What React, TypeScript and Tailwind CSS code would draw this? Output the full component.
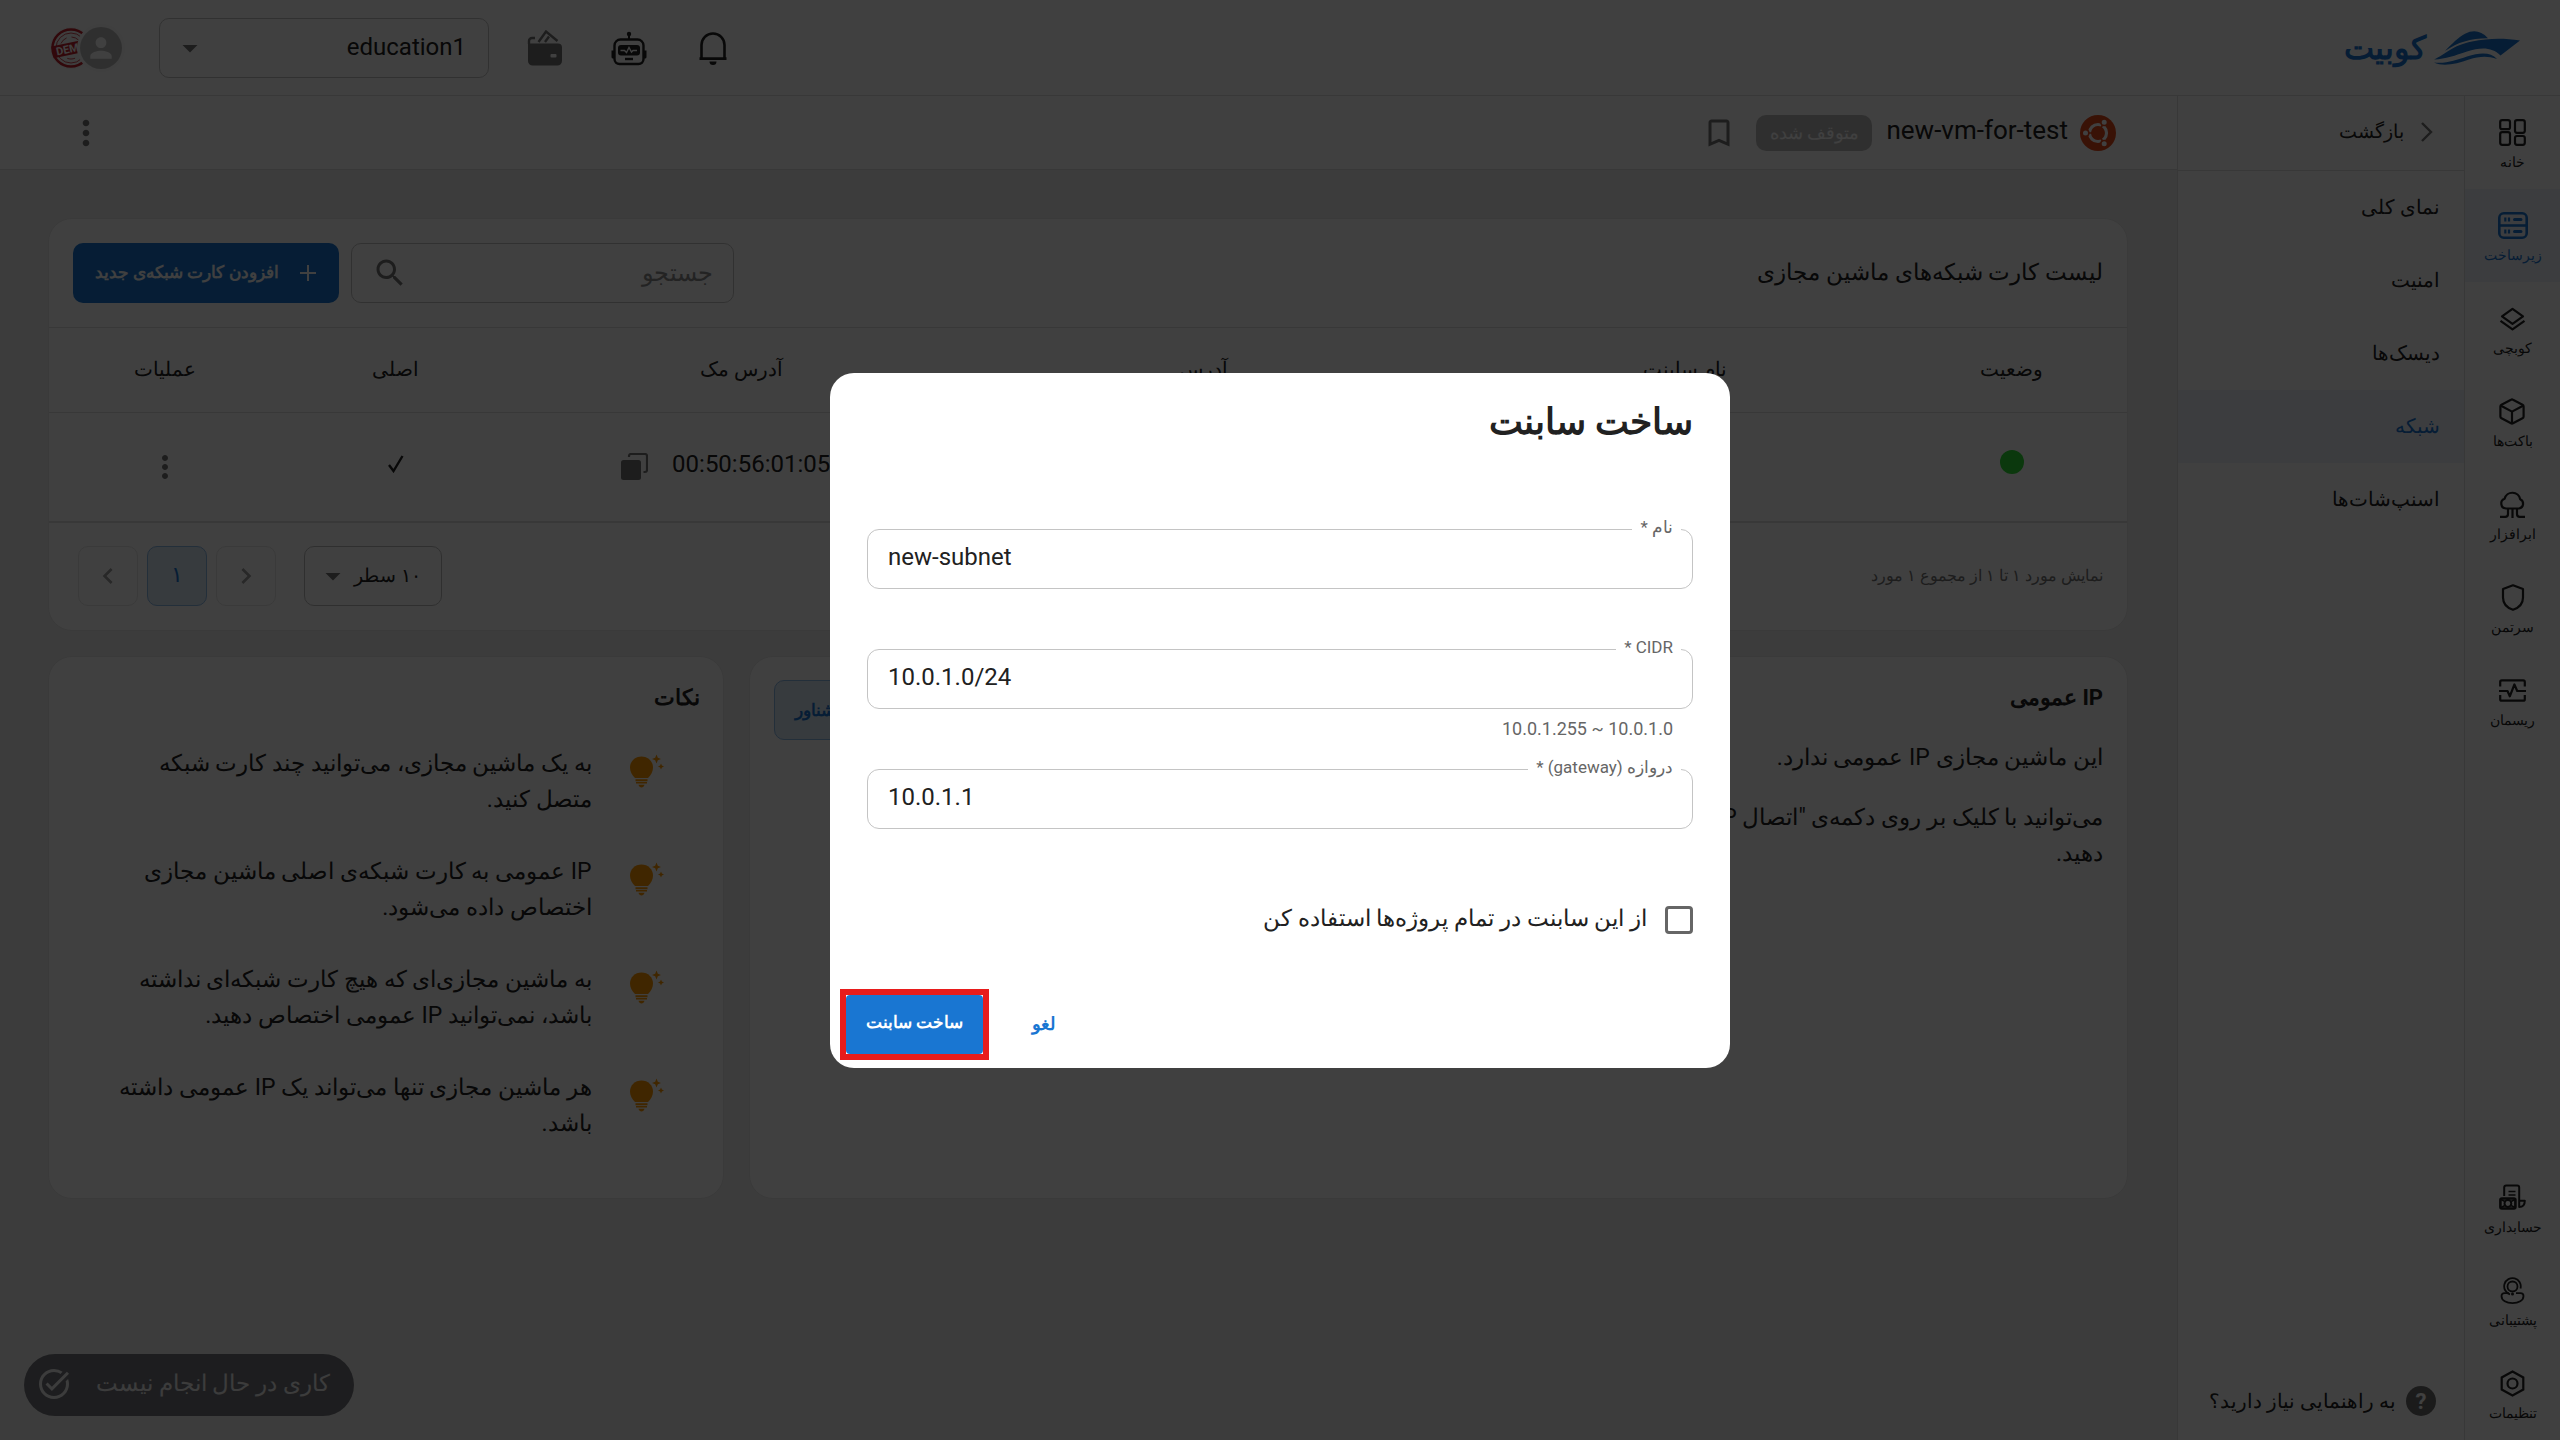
import type { ReactNode } from "react";

const FONT = "font-[Roboto,'Noto_Sans','Open_Sans',sans-serif]";

function Glyph({ d, className }: { d: string; className: string }) {
  return (
    <svg viewBox="0 0 24 24" fill="currentColor" className={"shrink-0 " + className} aria-hidden="true">
      <path d={d} />
    </svg>
  );
}

const MORE = "M12 8c1.1 0 2-.9 2-2s-.9-2-2-2-2 .9-2 2 .9 2 2 2zm0 2c-1.1 0-2 .9-2 2s.9 2 2 2 2-.9 2-2-.9-2-2-2zm0 6c-1.1 0-2 .9-2 2s.9 2 2 2 2-.9 2-2-.9-2-2-2z";
const DROP = "M7 10l5 5 5-5z";
const SEARCH =
  "M15.5 14h-.79l-.28-.27C15.41 12.59 16 11.11 16 9.5 16 5.91 13.09 3 9.5 3S3 5.91 3 9.5 5.91 16 9.5 16c1.61 0 3.09-.59 4.23-1.57l.27.28v.79l5 4.99L20.49 19l-4.99-5zm-6 0C7.01 14 5 11.99 5 9.5S7.01 5 9.5 5 14 7.01 14 9.5 11.99 14 9.5 14z";
const BOOKMARK = "M17 3H7c-1.1 0-1.99.9-1.99 2L5 21l7-3 7 3V5c0-1.1-.9-2-2-2zm0 15l-5-2.18L7 18V5h10v13z";
const PERSON = "M12 12c2.21 0 4-1.79 4-4s-1.79-4-4-4-4 1.79-4 4 1.79 4 4 4zm0 2c-2.67 0-8 1.34-8 4v2h16v-2c0-2.66-5.33-4-8-4z";
const TASK =
  "M22 5.18L10.59 16.6l-4.24-4.24 1.41-1.41 2.83 2.83 10-10L22 5.18zm-2.21 5.04c.13.57.21 1.17.21 1.78 0 4.42-3.58 8-8 8s-8-3.58-8-8 3.58-8 8-8c1.58 0 3.04.46 4.28 1.25l1.44-1.44A9.9 9.9 0 0 0 12 2C6.48 2 2 6.48 2 12s4.48 10 10 10 10-4.48 10-10c0-1.19-.22-2.33-.6-3.39l-1.61 1.61z";
const CHEV_R = "M10 6L8.59 7.41 13.17 12l-4.58 4.59L10 18l6-6z";
const CHEV_L = "M15.41 7.41L14 6l-6 6 6 6 1.41-1.41L10.83 12z";

function RailSvg({ children }: { children: ReactNode }) {
  return (
    <svg viewBox="0 0 27 27" className="size-[27px]" fill="none" stroke="currentColor" strokeWidth="2.2" strokeLinejoin="round" aria-hidden="true">
      {children}
    </svg>
  );
}

const topRail: { label: string; active?: boolean; icon: ReactNode }[] = [
  {
    label: "خانه",
    icon: (
      <RailSvg>
        <rect x="1.2" y="1.2" width="9.8" height="9" rx="2" />
        <rect x="16" y="1.2" width="9.8" height="12.6" rx="2" />
        <rect x="1.2" y="13.2" width="9.8" height="12.6" rx="2" />
        <rect x="16" y="17" width="9.8" height="8.8" rx="2" />
      </RailSvg>
    ),
  },
  {
    label: "زیرساخت",
    active: true,
    icon: (
      <svg viewBox="0 0 30 27" className="h-[27px] w-[30px]" fill="none" stroke="currentColor" strokeWidth="2.6" aria-hidden="true">
        <rect x="1.3" y="1.3" width="27.4" height="24.4" rx="4.5" />
        <path d="M1 13.5h28" />
        <path d="M7.3 5.4v4M11 5.4v4M7.3 17.4v4M11 17.4v4" strokeWidth="2.2" />
        <path d="M16.500 7.400h6.500M16.500 19.400h6.500" strokeWidth="3" strokeLinecap="round" />
      </svg>
    ),
  },
  {
    label: "کوبچی",
    icon: (
      <RailSvg>
        <path d="M13.5 3.800L24 11.300l-10.500 7.500L3 11.300z" />
        <path d="M1.500 15.800l12 8.600 12-8.600" />
      </RailSvg>
    ),
  },
  {
    label: "باکت‌ها",
    icon: (
      <RailSvg>
        <path d="M12 1.700a2 2 0 0 1 2 0l9.500 5a2 2 0 0 1 1.100 1.800v10a2 2 0 0 1-1.100 1.800l-9.500 5a2 2 0 0 1-2 0l-9.500-5a2 2 0 0 1-1.100-1.800v-10a2 2 0 0 1 1.100-1.800z" />
        <path d="M2 7.800l11 5.800 11-5.800M13 13.600v12" />
      </RailSvg>
    ),
  },
  {
    label: "ابرافزار",
    icon: (
      <RailSvg>
        <path d="M7 17.500a5 5 0 0 1-1.400-9.700 8 8 0 0 1 15.600.400A4.900 4.900 0 0 1 20 17.500z" />
        <path d="M13.500 17.500V27M9 17.500v5.500a2.800 2.800 0 0 1-2.800 2.800H1M18 17.500v5.500a2.800 2.800 0 0 0 2.800 2.800H26" />
      </RailSvg>
    ),
  },
  {
    label: "سرتمن",
    icon: (
      <RailSvg>
        <path d="M14 1.300L24 5v8.500c0 6.500-4 10.300-10 12.300-6-2-10-5.800-10-12.300V5z" />
      </RailSvg>
    ),
  },
  {
    label: "ریسمان",
    icon: (
      <RailSvg>
        <path d="M1.200 9.500V4.900a1.500 1.500 0 0 1 1.500-1.500h21.600a1.500 1.500 0 0 1 1.500 1.500v4.600M1.200 18v4.200a1.500 1.500 0 0 0 1.500 1.500h21.600a1.500 1.500 0 0 0 1.500-1.500V18" />
        <path d="M0 14h8.500l2.300 5.300 4.600-11.800 2.800 6.500H27" />
      </RailSvg>
    ),
  },
];

const bottomRail: { label: string; active?: boolean; icon: ReactNode }[] = [
  {
    label: "حسابداری",
    icon: (
      <RailSvg>
        <path d="M5.200 12V3.500a2 2 0 0 1 2-2h11a2 2 0 0 1 2 2V23c2.800 0 5.600-1 5.600-6.200h-5.600" strokeWidth="2" />
        <path d="M9.500 7.500h7M9.500 11h7" strokeWidth="1.600" />
        <rect x="1.400" y="14.500" width="15" height="10" rx="1.500" strokeWidth="2.600" />
        <circle cx="8.900" cy="19.500" r="3.400" strokeWidth="2" />
        <path d="M2 15.500l4 2M2 23.500l4-2M16 15.500l-4 2M16 23.500l-4-2" strokeWidth="1.800" />
      </RailSvg>
    ),
  },
  {
    label: "پشتیبانی",
    icon: (
      <RailSvg>
        <circle cx="13.500" cy="9.500" r="5" strokeWidth="1.800" />
        <path d="M21.500 11.500A8.300 8.300 0 1 0 11 17.300" strokeWidth="1.800" />
        <path d="M10 16.200H5.500c-2 0-3 1-3 2.700 0 4.500 5 7.200 11 7.200s11-2.700 11-7.200c0-1.700-1-2.700-3-2.700H17" strokeWidth="1.800" />
        <circle cx="13.500" cy="17" r="1.500" fill="currentColor" stroke="none" />
      </RailSvg>
    ),
  },
  {
    label: "تنظیمات",
    icon: (
      <RailSvg>
        <path d="M13.500 1.500l10.800 6v12l-10.800 6-10.800-6v-12z" strokeLinejoin="miter" />
        <circle cx="13.500" cy="13.500" r="5" />
      </RailSvg>
    ),
  },
];

function RailItem({ label, icon, active }: { label: string; icon: ReactNode; active?: boolean }) {
  return (
    <a
      href="#"
      className={"flex h-[93px] flex-col items-center gap-1 pt-[23px] " + (active ? "bg-[#edf4fb] text-[#1976d2]" : "text-[#212121]")}
    >
      {icon}
      <span className="text-[14px] leading-6">{label}</span>
    </a>
  );
}

const subnav = ["نمای کلی", "امنیت", "دیسک‌ها", "شبکه", "اسنپ‌شات‌ها"];

function Logo() {
  return (
    <a href="#" className="flex items-center gap-2 text-[#1976d2]">
      <svg viewBox="0 0 86 34" className="h-[34px] w-[86px]" fill="currentColor" aria-hidden="true">
        <path d="M0 28.500C12 23 18 14.500 38 10.500 55 7 70 7 86 9.500L66.500 24.500C58 16 47 16 33 20.500 21 24.500 12 28 0 28.500z" />
        <path d="M11 20C18 13 24 6.500 31 2.800c8.500-4.300 16-3 23 4.400C36 7.500 24 11 11 20z" />
        <path d="M0 31.500c12 1.500 22-2.500 33-6 14-4.500 24-4 30 2.500-10-3.500-18-2.500-28 .5-12 4.500-26 7.500-35 3z" />
      </svg>
      <span className="text-[32px] leading-10 font-bold">کوبیت</span>
    </a>
  );
}

function Bell() {
  return (
    <svg viewBox="0 0 36 36" className="size-9" fill="none" stroke="currentColor" strokeWidth="2.600" aria-hidden="true">
      <path d="M6.500 28V15a11.500 11.500 0 0 1 23 0v13M4.500 28.600h27" />
      <path d="M14.500 31.500h7a3.500 3.500 0 0 1-7 0z" fill="currentColor" stroke="none" />
    </svg>
  );
}

function Robot() {
  return (
    <svg viewBox="0 0 36 36" className="size-9" fill="none" stroke="currentColor" strokeWidth="2.400" aria-hidden="true">
      <circle cx="18" cy="4" r="2.200" fill="currentColor" stroke="none" />
      <path d="M18 5v5" strokeWidth="2" />
      <path d="M9.500 9.500h17a6 6 0 0 1 6 6V29a5 5 0 0 1-5 5h-19a5 5 0 0 1-5-5V15.500a6 6 0 0 1 6-6z" />
      <path d="M.5 20.500h2.500v8H2a1.500 1.500 0 0 1-1.500-1.500zM35.500 20.500H33v8h1a1.500 1.500 0 0 0 1.500-1.500z" fill="currentColor" stroke="none" />
      <rect x="7" y="15" width="22" height="10.500" rx="3" fill="currentColor" stroke="none" />
      <path d="M9.500 20.500h4l2 2 2.500-5 2.500 4.500 1.500-1.500h4" stroke="#fff" strokeWidth="1.400" />
      <path d="M14 29h8" strokeWidth="2.400" />
    </svg>
  );
}

function Wallet() {
  return (
    <svg viewBox="0 0 36 36" className="size-9" aria-hidden="true">
      <path d="M2 14V11a3 3 0 0 1 3-3h3" fill="none" stroke="currentColor" strokeWidth="2.400" />
      <path d="M11.500 12L19 1.500 30.500 11M18 12l4-5.500" fill="none" stroke="currentColor" strokeWidth="2.400" />
      <path d="M1 13.500h30a4 4 0 0 1 4 4V31a4.500 4.500 0 0 1-4.500 4.500h-25A4.500 4.500 0 0 1 1 31z" fill="currentColor" />
      <rect x="23.500" y="24" width="6" height="3.500" rx="1" fill="#fff" />
    </svg>
  );
}

function Ubuntu() {
  return (
    <svg viewBox="0 0 36 36" className="size-9 shrink-0" aria-hidden="true">
      <circle cx="18" cy="18" r="18" fill="#e2491a" />
      <circle cx="18" cy="18" r="8.500" fill="none" stroke="#fff" strokeWidth="3.200" />
      <g stroke="#e2491a" strokeWidth="1.600" fill="#fff">
        <path d="M18 18H4M18 18l7-12.500M18 18l7 12.500" />
        <circle cx="18" cy="18" r="6.500" fill="#e2491a" stroke="none" />
        <circle cx="5.500" cy="18" r="3.300" />
        <circle cx="24.200" cy="7.200" r="3.300" />
        <circle cx="24.200" cy="28.800" r="3.300" />
      </g>
    </svg>
  );
}

function DemoAvatar() {
  return (
    <svg viewBox="0 0 42 42" className="size-[42px]" aria-hidden="true">
      <circle cx="21" cy="21" r="21" fill="#f7f7f7" />
      <g fill="none" stroke="#c4202c">
        <circle cx="21" cy="21" r="18.500" strokeWidth="2.500" />
        <circle cx="21" cy="21" r="15" strokeWidth=".8" />
        <circle cx="21" cy="21" r="11" strokeWidth=".8" strokeDasharray="8 5" />
      </g>
      <g transform="rotate(-12 21 21)">
        <rect x="2" y="15.500" width="38" height="12" fill="#c4202c" />
        <text x="21" y="25.500" textAnchor="middle" fontFamily="Roboto" fontWeight="700" fontSize="11" fill="#fff">DEMO</text>
      </g>
    </svg>
  );
}

function Header() {
  return (
    <header className="flex h-24 items-center border-b border-[#e0e0e0] bg-white pr-10 pl-[50px] text-[#212121]">
      <Logo />
      <div className="mr-auto flex items-center gap-12">
        <button aria-label="اعلان‌ها"><Bell /></button>
        <button aria-label="دستیار"><Robot /></button>
        <button aria-label="کیف پول" className="text-[#757575]"><Wallet /></button>
      </div>
      <button className="mr-[38px] flex h-[60px] w-[330px] items-center justify-between rounded-[10px] border border-[#c4c4c4] pr-[22px] pl-3 text-[24px]">
        <span className="pb-0.5">education1</span>
        <Glyph d={DROP} className="size-9 text-[#757575]" />
      </button>
      <button aria-label="حساب کاربری" className="mr-[37px] flex items-center">
        <span className="z-10 flex size-[42px] items-center justify-center rounded-full bg-[#bdbdbd] text-white ring-3 ring-[#fafafa]">
          <Glyph d={PERSON} className="size-8" />
        </span>
        <span className="-mr-3"><DemoAvatar /></span>
      </button>
    </header>
  );
}

const th = "pb-0.5 text-center font-normal";

function NetworkCard() {
  return (
    <section className="rounded-3xl border border-[#e6e6e6] bg-white">
      <div className="flex h-[108px] items-center px-6">
        <h2 className="ml-auto text-[23px] leading-9">لیست کارت شبکه‌های ماشین مجازی</h2>
        <label className="flex h-[60px] w-[383px] items-center rounded-[10px] border border-[#c4c4c4] pr-5 pl-5">
          <input type="text" aria-label="جستجو" placeholder="جستجو" className="min-w-0 flex-1 text-[24px] outline-none placeholder:text-[#8c8c8c]" />
          <Glyph d={SEARCH} className="size-9 text-[#757575]" />
        </label>
        <button className="mr-3 flex h-[60px] items-center gap-5 rounded-[10px] bg-[#1976d2] px-[22px] text-[17px] font-bold text-white">
          <svg viewBox="0 0 18 18" className="size-[18px]" stroke="currentColor" strokeWidth="2" aria-hidden="true">
            <path d="M9 1v16M1 9h16" />
          </svg>
          افزودن کارت شبکه‌ی جدید
        </button>
      </div>
      <table className="w-full table-fixed border-t border-[#e0e0e0] text-[20px]">
        <thead>
          <tr className="h-[85px] border-b border-[#e0e0e0]">
            <th className={th + " w-[11.11%]"}>وضعیت</th>
            <th className={th + " w-[22.22%] pl-10"}>نام سابنت</th>
            <th className={th + " w-[22.22%]"}>آدرس</th>
            <th className={th + " w-[22.22%]"}>آدرس مک</th>
            <th className={th + " w-[11.11%]"}>اصلی</th>
            <th className={th}>عملیات</th>
          </tr>
        </thead>
        <tbody>
          <tr className="h-[109px] border-b-2 border-[#e0e0e0] text-center">
            <td className="pb-3"><span className="inline-block size-6 rounded-full bg-[#2cde34] align-middle" role="img" aria-label="فعال" /></td>
            <td />
            <td />
            <td>
              <span className="flex items-center justify-center gap-6 text-[24px]">
                <span dir="ltr" className="pb-1.5">00:50:56:01:05:2a</span>
                <button aria-label="کپی" className="text-[#757575]">
                  <svg viewBox="0 0 27 27" className="size-[27px]" aria-hidden="true">
                    <rect x="0" y="7" width="20" height="20" rx="2.500" fill="currentColor" />
                    <path d="M8 4V3a2 2 0 0 1 2-2h14a2 2 0 0 1 2 2v14a2 2 0 0 1-2 2h-1.500" fill="none" stroke="currentColor" strokeWidth="2.200" />
                  </svg>
                </button>
              </span>
            </td>
            <td className="pb-2">
              <svg viewBox="0 0 16 18" className="inline-block h-[18px] w-4" fill="none" stroke="currentColor" strokeWidth="2.400" aria-label="بله" role="img">
                <path d="M1 10l4.500 6L14.500 1" />
              </svg>
            </td>
            <td><button aria-label="عملیات بیشتر" className="align-middle text-[#757575]"><Glyph d={MORE} className="size-9" /></button></td>
          </tr>
        </tbody>
      </table>
      <div className="flex h-[107px] items-center pr-6 pl-[29px]">
        <p className="ml-auto text-[16px] text-[#757575]">نمایش مورد ۱ تا ۱ از مجموع ۱ مورد</p>
        <button className="flex h-[60px] w-[138px] items-center justify-between rounded-[10px] border border-[#bdbdbd] pr-5 pl-2.5 text-[19px]">
          ۱۰ سطر
          <Glyph d={DROP} className="size-9 text-[#757575]" />
        </button>
        <nav aria-label="صفحه‌بندی" className="mr-7 flex gap-[9px]">
          <button aria-label="قبلی" className="flex h-[60px] w-[60px] items-center justify-center rounded-[10px] border border-[#e6e6e6] text-[#9e9e9e]"><Glyph d={CHEV_R} className="size-8" /></button>
          <button className="flex h-[60px] w-[60px] items-center justify-center rounded-[10px] border border-[#8cbae8] bg-[#dae9f6] pb-1 text-[22px] text-[#1976d2]">۱</button>
          <button aria-label="بعدی" className="flex h-[60px] w-[60px] items-center justify-center rounded-[10px] border border-[#e6e6e6] text-[#9e9e9e]"><Glyph d={CHEV_L} className="size-8" /></button>
        </nav>
      </div>
    </section>
  );
}

function Bulb() {
  return (
    <svg viewBox="0 0 34 34" className="mt-2 h-[34px] w-[34px] shrink-0 text-[#ff9800]" fill="currentColor" aria-hidden="true">
      <path d="M11.500 2.500C18 2.500 23 7.400 23 13.500c0 4.500-2 7.500-5 10.500H5c-3-3-5-6-5-10.500C0 7.400 5 2.500 11.500 2.500z" />
      <path d="M5.500 25.200h12v2h-12zM6 28h11v1.600H6zM8.500 30.800h6c-.5 1.800-1.600 2.700-3 2.700s-2.500-.9-3-2.700z" />
      <path d="M26.500.5l1.300 3.200 3.200 1.300-3.200 1.300-1.300 3.200-1.300-3.200L22 5l3.200-1.300zM31 9.500l.9 2.100 2.100.9-2.100.9-.9 2.100-.9-2.100-2.100-.9 2.100-.9z" />
    </svg>
  );
}

const tips = [
  ["به یک ماشین مجازی، می‌توانید چند کارت شبکه", "متصل کنید."],
  ["IP عمومی به کارت شبکه‌ی اصلی ماشین مجازی", "اختصاص داده می‌شود."],
  ["به ماشین مجازی‌ای که هیچ کارت شبکه‌ای نداشته", "باشد، نمی‌توانید IP عمومی اختصاص دهید."],
  ["هر ماشین مجازی تنها می‌تواند یک IP عمومی داشته", "باشد."],
];

function PublicIpCard() {
  return (
    <section className="rounded-3xl border border-[#e6e6e6] bg-white px-6 pt-[23px] text-[23px] leading-9">
      <div className="flex h-[60px] items-start justify-between">
        <h2 className="text-[22px] font-bold">IP عمومی</h2>
        <button className="h-[60px] rounded-[10px] border border-[#8cbae8] bg-[#dae9f6] px-5 text-[17px] font-bold text-[#1976d2]">اتصال IP شناور</button>
      </div>
      <p>این ماشین مجازی IP عمومی ندارد.</p>
      <p className="mt-6">
        می‌توانید با کلیک بر روی دکمه‌ی "اتصال IP شناور" به این ماشین مجازی یک IP عمومی اختصاص
        <br />
        دهید.
      </p>
    </section>
  );
}

function TipsCard() {
  return (
    <section className="rounded-3xl border border-[#e6e6e6] bg-white px-[23px] pt-[23px] pb-14 text-[23px] leading-9">
      <h2 className="text-[22px] font-bold">نکات</h2>
      <ul className="mt-[30px] flex flex-col gap-9 pr-9">
        {tips.map((lines) => (
          <li key={lines[0]} className="flex gap-[38px]">
            <Bulb />
            <p>
              {lines[0]}
              <br />
              {lines[1]}
            </p>
          </li>
        ))}
      </ul>
    </section>
  );
}

function Field({ id, label, value, hint }: { id: string; label: string; value: string; hint?: string }) {
  return (
    <div className="h-[120px]">
      <div className="relative">
        <label htmlFor={id} className="absolute -top-3 right-3 bg-white px-2 text-[17px] leading-5 text-[#666666]">{label}</label>
        <input id={id} type="text" required dir="ltr" defaultValue={value} className="h-[60px] w-full rounded-xl border border-[#c4c4c4] px-5 pb-1 text-[24px] text-[#212121] outline-none" />
      </div>
      {hint && <p className="pt-2 pr-5 text-[18px] leading-6 text-[#666666]">{hint}</p>}
    </div>
  );
}

function SubnetDialog() {
  return (
    <div role="dialog" aria-modal="true" aria-labelledby="dialog-title" className="flex w-[900px] flex-col rounded-3xl bg-white pt-6 pb-2 text-[#212121]">
      <h1 id="dialog-title" className="px-[37px] text-[36px] leading-[50px] font-bold">ساخت سابنت</h1>
      <form className="mt-[82px] flex flex-col" onSubmit={(e) => e.preventDefault()}>
        <div className="px-[37px]">
          <Field id="subnet-name" label="نام *" value="new-subnet" />
          <Field id="subnet-cidr" label="CIDR *" value="10.0.1.0/24" hint="10.0.1.0 ~ 10.0.1.255" />
          <Field id="subnet-gateway" label="دروازه (gateway) *" value="10.0.1.1" />
          <label className="mt-[13px] flex h-9 items-center gap-[18px] text-[23px]">
            <input type="checkbox" className="size-[28px] appearance-none rounded-[4px] border-3 border-[#666666]" />
            از این سابنت در تمام پروژه‌ها استفاده کن
          </label>
        </div>
        <div className="mt-[51px] flex items-center justify-end gap-1 pl-2.5">
          <button type="button" className="px-[39px] pt-3.5 pb-4 text-[18px] font-bold text-[#1976d2]">لغو</button>
          <div className="border-6 border-[#e81c1c]">
            <button type="submit" className="h-[59px] w-[137px] rounded-[4px] bg-[#1976d2] pb-0.5 text-[17px] font-bold text-white">ساخت سابنت</button>
          </div>
        </div>
      </form>
    </div>
  );
}

export default function App() {
  return (
    <div dir="rtl" lang="fa" className={"flex min-h-screen flex-col bg-[#f0f0f0] text-[#212121] " + FONT}>
      <Header />
      <div className="flex flex-1">
        <nav aria-label="منوی اصلی" className="flex w-24 flex-col border-l border-[#e0e0e0] bg-white">
          {topRail.map((r) => <RailItem key={r.label} {...r} />)}
          <div className="mt-auto">
            {bottomRail.map((r) => <RailItem key={r.label} {...r} />)}
          </div>
        </nav>
        <nav aria-label="منوی ماشین مجازی" className="flex w-[287px] flex-col border-l border-[#e0e0e0] bg-white text-[20px]">
          <a href="#" className="flex h-[75px] items-center gap-3 border-b border-[#e0e0e0] pr-6 pb-0.5 text-[19px]">
            <svg viewBox="0 0 24 24" className="size-6 text-[#757575]" fill="none" stroke="currentColor" strokeWidth="2.400" aria-hidden="true">
              <path d="M6 3l9 9-9 9" />
            </svg>
            بازگشت
          </a>
          {subnav.map((s) => (
            <a key={s} href="#" className={"flex h-[73px] items-center pr-6 pb-0.5 " + (s === "شبکه" ? "bg-[#edf4fb] text-[#1976d2]" : "")}>{s}</a>
          ))}
          <a href="#" className="mt-auto mb-6 flex items-center gap-2.5 pr-7">
            <span className="flex size-[30px] items-center justify-center rounded-full bg-[#6e6e6e] text-[22px] font-bold text-white">?</span>
            به راهنمایی نیاز دارید؟
          </a>
        </nav>
        <div className="flex min-w-0 flex-1 flex-col">
          <div className="flex h-[74px] items-center border-b border-[#e0e0e0] bg-white pr-[61px] pl-[66px]">
            <Ubuntu />
            <span className="mr-3 pb-1.5 text-[26px] leading-9">new-vm-for-test</span>
            <span className="mr-3.5 flex h-9 w-[116px] items-center justify-center rounded-[10px] bg-[#bdbdbd] text-[18px] text-white">متوقف شده</span>
            <button aria-label="نشان کردن" className="mr-[19px] text-[#757575]"><Glyph d={BOOKMARK} className="size-9" /></button>
            <button aria-label="بیشتر" className="mr-auto text-[#757575]"><Glyph d={MORE} className="size-10" /></button>
          </div>
          <main className="flex flex-col gap-[25px] pt-12 pr-[49px] pl-12">
            <NetworkCard />
            <div className="grid grid-cols-[49fr_24fr] gap-[25px]">
              <PublicIpCard />
              <TipsCard />
            </div>
          </main>
        </div>
      </div>

      <div className="fixed bottom-6 left-6 flex h-[62px] items-center gap-6 rounded-full bg-[#74767c] pr-6 pb-0.5 pl-3 text-[23px] text-[#f0f0f0]">
        کاری در حال انجام نیست
        <Glyph d={TASK} className="size-9" />
      </div>

      <div className="fixed inset-0 z-20 flex items-center justify-center bg-black/75">
        <SubnetDialog />
      </div>
    </div>
  );
}
